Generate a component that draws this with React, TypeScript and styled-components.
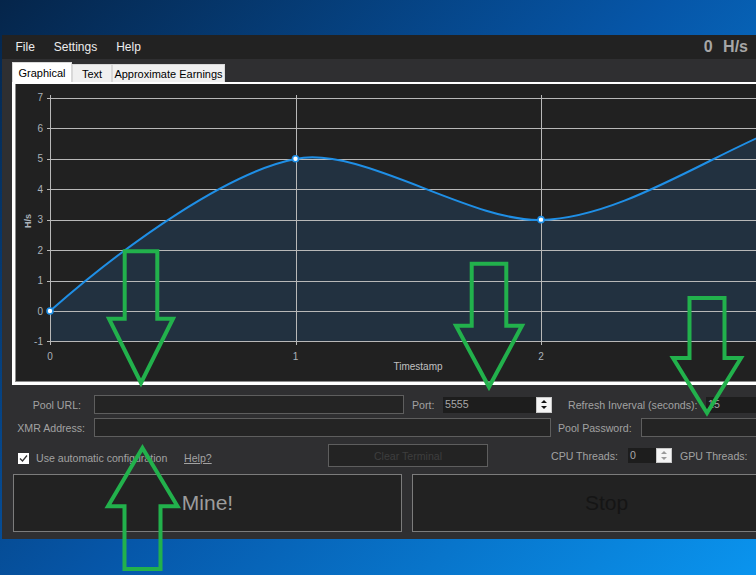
import React from "react";
import styled, { createGlobalStyle } from "styled-components";

const GlobalStyle = createGlobalStyle`
  html, body { margin: 0; padding: 0; }
  body { font-family: "Liberation Sans", Arial, sans-serif; }
  * { box-sizing: border-box; }
`;

const Desktop = styled.div`
  position: relative;
  width: 756px;
  height: 575px;
  overflow: hidden;
  padding: 35px 0 0 2px;
  background: linear-gradient(135deg, #05254a 0%, #0656a8 50%, #0a94ee 100%);
`;

const Window = styled.div`
  width: 810px;
  background: #2f2f31;
  display: flex;
  flex-direction: column;
`;

const MenuBar = styled.div`
  height: 24px;
  background: #222222;
  display: flex;
  align-items: center;
  padding: 0 64px 0 4px;
  font-size: 12px;
  color: #ededed;
`;

const MenuItem = styled.span`
  padding: 0 9.5px;
`;

const Rate = styled.span`
  margin-left: auto;
  font-weight: bold;
  font-size: 16px;
  color: #a6a6a6;
  word-spacing: 6px;
`;

const TabStrip = styled.div`
  display: flex;
  align-items: flex-end;
  height: 23px;
  padding-left: 10px;
`;

const Tab = styled.div<{ $active?: boolean; $w: number }>`
  width: ${(p) => p.$w}px;
  height: ${(p) => (p.$active ? 20 : 18)}px;
  background: ${(p) => (p.$active ? "#ffffff" : "#f0f0f0")};
  border: 1px solid #d9d9d9;
  border-bottom: none;
  display: flex;
  align-items: center;
  justify-content: center;
  font-size: 11px;
  color: #000;
  white-space: nowrap;
`;

const TabPanel = styled.div`
  margin-left: 10px;
  background: #ffffff;
  padding: 2px 0 3px 3px;
`;

const ChartBox = styled.div`
  height: 298px;
  background: #212121;
  border-left: 1px solid #8a8a8a;
  border-bottom: 1px solid #8a8a8a;
  overflow: hidden;
`;

const Form = styled.div`
  display: flex;
  flex-direction: column;
  padding: 10px 0 7px;
`;

const Row = styled.div<{ $h: number; $mt?: number }>`
  display: flex;
  align-items: center;
  height: ${(p) => p.$h}px;
  margin-top: ${(p) => p.$mt ?? 0}px;
`;

const FieldLabel = styled.span<{ $w?: number; $ml?: number; $right?: boolean }>`
  ${(p) => (p.$w ? `width: ${p.$w}px;` : "")}
  margin-left: ${(p) => p.$ml ?? 0}px;
  text-align: ${(p) => (p.$right ? "right" : "left")};
  font-size: 10.6px;
  color: #a2a2a2;
  white-space: nowrap;
  flex-shrink: 0;
`;

const TextBox = styled.div<{ $w: number; $ml?: number; $h?: number }>`
  width: ${(p) => p.$w}px;
  height: ${(p) => p.$h ?? 19}px;
  margin-left: ${(p) => p.$ml ?? 0}px;
  background: #242424;
  border: 1px solid #5e5e5e;
  flex-shrink: 0;
`;

const NumBox = styled.div<{ $w: number; $h: number; $ml?: number }>`
  width: ${(p) => p.$w}px;
  height: ${(p) => p.$h}px;
  margin-left: ${(p) => p.$ml ?? 0}px;
  display: flex;
  flex-shrink: 0;
`;

const NumField = styled.div`
  flex: 1;
  background: #1d1d1d;
  color: #a8a8a8;
  font-size: 10.6px;
  padding-left: 2px;
  line-height: 14px;
`;

const Spinner = styled.div`
  width: 16px;
  background: #f4f4f4;
  border: 1px solid #c8c8c8;
  display: flex;
  flex-direction: column;
  align-items: center;
  justify-content: space-evenly;
`;

const Tri = styled.span<{ $up?: boolean; $dim?: boolean }>`
  width: 0;
  height: 0;
  border-left: 3px solid transparent;
  border-right: 3px solid transparent;
  ${(p) =>
    p.$up
      ? `border-bottom: 3px solid ${p.$dim ? "#9a9a9a" : "#111"};`
      : `border-top: 3px solid ${p.$dim ? "#9a9a9a" : "#111"};`}
`;

const CheckGroup = styled.div`
  display: flex;
  align-items: center;
  margin-top: 5px;
  margin-left: 16px;
  width: 166px;
  flex-shrink: 0;
`;

const CheckBox = styled.span`
  width: 11px;
  height: 11px;
  background: #ffffff;
  display: flex;
  align-items: center;
  justify-content: center;
  margin-right: 7px;
`;

const HelpLink = styled.span`
  width: 144px;
  margin-top: 5px;
  font-size: 10.6px;
  color: #a2a2a2;
  text-decoration: underline;
  flex-shrink: 0;
`;

const SmallButton = styled.div`
  width: 160px;
  height: 23px;
  background: #232323;
  border: 1px solid #5e5e5e;
  display: flex;
  align-items: center;
  justify-content: center;
  font-size: 10.6px;
  color: #3e3e3e;
  flex-shrink: 0;
`;

const BigButton = styled.div<{ $color: string; $ml: number }>`
  width: 389px;
  height: 58px;
  margin-left: ${(p) => p.$ml}px;
  background: #222222;
  border: 1px solid #7c7c7c;
  display: flex;
  align-items: center;
  justify-content: center;
  font-size: 21px;
  color: ${(p) => p.$color};
  flex-shrink: 0;
`;

const Overlay = styled.svg`
  position: absolute;
  left: 0;
  top: 0;
  pointer-events: none;
`;

const yOf = (v: number) => 311 - 30.45 * v;
const ticksY = [7, 6, 5, 4, 3, 2, 1, 0, -1];
const ticksX = [
  { x: 50, l: "0" },
  { x: 295.5, l: "1" },
  { x: 541, l: "2" },
];
const points = [
  { x: 50, v: 0 },
  { x: 295.5, v: 5 },
  { x: 541, v: 3 },
];
const curve =
  "M50,311 C130,240.6 230,171.5 295.5,159 C360,145 470,222 541,220 C621,218 710,155 787,125";
const area = curve + " L787,341.5 L50,341.5 Z";

const Chart: React.FC = () => (
  <svg width={800} height={297} viewBox="16 84 800 297" style={{ display: "block" }}>
    <path d={area} fill="#223140" />
    {ticksY.map((v) => {
      const y = Math.round(yOf(v)) + 0.5;
      return <line key={v} x1={47} x2={820} y1={y} y2={y} stroke="#b8b8b8" strokeWidth={1} />;
    })}
    <line x1={50.5} x2={50.5} y1={95} y2={345} stroke="#b8b8b8" />
    {ticksX.slice(1).map((t) => (
      <line key={t.l} x1={Math.round(t.x) + 0.5} x2={Math.round(t.x) + 0.5} y1={95} y2={345} stroke="#b8b8b8" />
    ))}
    {ticksY.map((v) => (
      <text
        key={"t" + v}
        x={43}
        y={yOf(v) + 3.5}
        textAnchor="end"
        fontSize={10}
        fill="#aab2ba"
        fontFamily="Liberation Sans, Arial, sans-serif"
      >
        {v}
      </text>
    ))}
    {ticksX.map((t) => (
      <text
        key={"x" + t.l}
        x={t.x}
        y={360}
        textAnchor="middle"
        fontSize={10}
        fill="#aab2ba"
        fontFamily="Liberation Sans, Arial, sans-serif"
      >
        {t.l}
      </text>
    ))}
    <text
      x={418}
      y={369.5}
      textAnchor="middle"
      fontSize={10}
      fill="#c0c0c0"
      fontFamily="Liberation Sans, Arial, sans-serif"
    >
      Timestamp
    </text>
    <text
      x={27.5}
      y={221}
      transform="rotate(-90 27.5 221)"
      textAnchor="middle"
      dy={3}
      fontSize={9}
      fontWeight="bold"
      fill="#aab2ba"
      fontFamily="Liberation Sans, Arial, sans-serif"
    >
      H/s
    </text>
    <path d={curve} fill="none" stroke="#1f8fe6" strokeWidth={2} />
    {points.map((p) => (
      <circle key={p.x} cx={p.x} cy={yOf(p.v)} r={3} fill="#ffffff" stroke="#1f8fe6" strokeWidth={1.6} />
    ))}
  </svg>
);

const arrows = [
  "M124.7,251.3 L157.3,251.3 L157.3,318.7 L173,318.7 L141,383 L109,318.7 L124.7,318.7 Z",
  "M142.5,448 L177.5,506.3 L160.5,506.3 L160.5,569 L124.5,569 L124.5,506.3 L108,506.3 Z",
  "M471.7,263.7 L506.3,263.7 L506.3,325.7 L522,325.7 L489,387 L456,325.7 L471.7,325.7 Z",
  "M689.5,298 L724.5,298 L724.5,358 L741,358 L707,413 L673,358 L689.5,358 Z",
];

export default function App() {
  return (
    <>
      <GlobalStyle />
      <Desktop>
        <Window>
          <MenuBar>
            <MenuItem>File</MenuItem>
            <MenuItem>Settings</MenuItem>
            <MenuItem>Help</MenuItem>
            <Rate>0 H/s</Rate>
          </MenuBar>
          <TabStrip>
            <Tab $active $w={60}>Graphical</Tab>
            <Tab $w={40}>Text</Tab>
            <Tab $w={113}>Approximate Earnings</Tab>
          </TabStrip>
          <TabPanel>
            <ChartBox>
              <Chart />
            </ChartBox>
          </TabPanel>
          <Form>
            <Row $h={19}>
              <FieldLabel $w={79} $right>Pool URL:</FieldLabel>
              <TextBox $w={310} $ml={13} />
              <FieldLabel $w={31} $ml={8}>Port:</FieldLabel>
              <NumBox $w={109} $h={16}>
                <NumField>5555</NumField>
                <Spinner>
                  <Tri $up />
                  <Tri />
                </Spinner>
              </NumBox>
              <FieldLabel $w={138} $ml={16}>Refresh Inverval (seconds):</FieldLabel>
              <NumBox $w={100} $h={16}>
                <NumField>15</NumField>
              </NumBox>
            </Row>
            <Row $h={19} $mt={4}>
              <FieldLabel $w={83} $right>XMR Address:</FieldLabel>
              <TextBox $w={457} $ml={9} />
              <FieldLabel $w={83} $ml={7}>Pool Password:</FieldLabel>
              <TextBox $w={160} />
            </Row>
            <Row $h={23} $mt={7}>
              <CheckGroup>
                <CheckBox>
                  <svg width="9" height="9" viewBox="0 0 9 9">
                    <path d="M1,4.5 L3.5,7 L8,1.5" fill="none" stroke="#333" strokeWidth="1.3" />
                  </svg>
                </CheckBox>
                <FieldLabel>Use automatic configuration</FieldLabel>
              </CheckGroup>
              <HelpLink>Help?</HelpLink>
              <SmallButton>Clear Terminal</SmallButton>
              <FieldLabel $w={77} $ml={63}>CPU Threads:</FieldLabel>
              <NumBox $w={44} $h={15}>
                <NumField>0</NumField>
                <Spinner>
                  <Tri $up $dim />
                  <Tri $dim />
                </Spinner>
              </NumBox>
              <FieldLabel $ml={8}>GPU Threads:</FieldLabel>
            </Row>
            <Row $h={58} $mt={7}>
              <BigButton $color="#9c9c9c" $ml={11}>Mine!</BigButton>
              <BigButton $color="#151515" $ml={10}>Stop</BigButton>
            </Row>
          </Form>
        </Window>
        <Overlay width={756} height={575} viewBox="0 0 756 575">
          {arrows.map((d, i) => (
            <path key={i} d={d} fill="none" stroke="#22b14c" strokeWidth={4} strokeLinejoin="miter" />
          ))}
        </Overlay>
      </Desktop>
    </>
  );
}
